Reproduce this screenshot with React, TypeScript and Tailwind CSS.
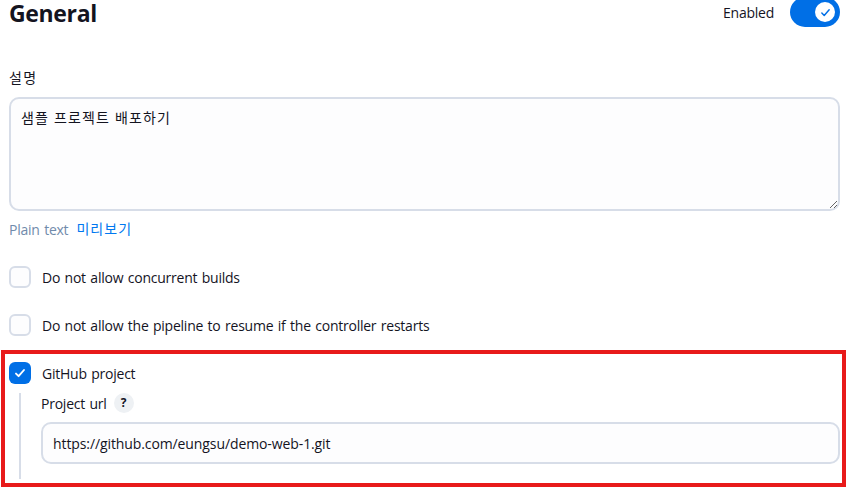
import React from "react";

function Check({ size, color, width = 2 }: { size: number; color: string; width?: number }) {
  return (
    <svg width={size} height={size} viewBox="0 0 12 12" fill="none" stroke={color} strokeWidth={width} strokeLinecap="round" strokeLinejoin="round">
      <path d="M2 6.6 4.6 9.2 10 3" />
    </svg>
  );
}

function Checkbox({ label, checked = false }: { label: string; checked?: boolean }) {
  return (
    <label className="flex h-[22px] items-center gap-[11px]">
      <span
        className={
          checked
            ? "flex size-[22px] items-center justify-center rounded-[6px] bg-[#006fe6]"
            : "size-[22px] rounded-[6px] border-2 border-[#d7dde8] bg-[#fdfdfe]"
        }
      >
        {checked && <Check size={12} color="#fff" width={1.9} />}
      </span>
      <span className="whitespace-nowrap pt-[2px] leading-5">{label}</span>
    </label>
  );
}

export default function App() {
  return (
    <main className="relative h-[488px] w-[860px] bg-white pl-[9px] pr-5 font-['Open_Sans','Noto_Sans_CJK_KR',sans-serif] text-[14px] tracking-[-0.24px] text-[#14141f] [word-spacing:1.1px]">
      <header className="flex h-[27px] items-start justify-between">
        <h1 className="text-[23px] font-bold leading-[26px] tracking-[-0.35px]">General</h1>
        <div className="flex items-start gap-4">
          <span className="pt-[3px] leading-5 tracking-[-0.24px]">Enabled</span>
          <span className="-mt-[3px] flex h-[30px] w-[50px] items-center justify-end rounded-full bg-[#006fe6] pr-[5px]">
            <span className="flex size-5 items-center justify-center rounded-full bg-white">
              <Check size={11} color="#006fe6" width={1.6} />
            </span>
          </span>
        </div>
      </header>

      <section className="pt-[41px]">
        <div className="h-[29px] leading-5 tracking-[1.3px]">설명</div>
        <textarea
          className="block h-[114px] w-full resize-y rounded-[10px] border-2 border-[#d7dde8] bg-[#fdfdfe] px-[10px] py-[9px] leading-5 tracking-[1.1px] outline-none [word-spacing:0.3px]"
          defaultValue="샘플 프로젝트 배포하기"
        />
        <div className="flex h-[55px] gap-2 pt-2 leading-5">
          <span className="pt-px text-[#718bab]">Plain text</span>
          <a className="tracking-[1.1px] text-[#0078f0]">미리보기</a>
        </div>
      </section>

      <section className="flex flex-col gap-[26px]">
        <Checkbox label="Do not allow concurrent builds" />
        <Checkbox label="Do not allow the pipeline to resume if the controller restarts" />
        <Checkbox label="GitHub project" checked />
      </section>

      <div className="ml-[10px] mt-[9px] h-[86px] border-l-2 border-[#d7dde8] pl-5">
        <div className="flex h-[29px] items-start gap-[7px]">
          <span className="pt-px leading-5">Project url</span>
          <span className="flex size-5 items-center justify-center rounded-full bg-[#eef1f4] text-[12px] font-bold">?</span>
        </div>
        <input
          className="block h-[42px] w-full rounded-[10px] border-2 border-[#d7dde8] bg-[#fdfdfe] px-[10px] tracking-[-0.1px] outline-none"
          defaultValue="https://github.com/eungsu/demo-web-1.git"
        />
      </div>

      <div className="pointer-events-none absolute left-px top-[350px] h-[137px] w-[845px] border-4 border-[#e81a1a]" />
    </main>
  );
}
